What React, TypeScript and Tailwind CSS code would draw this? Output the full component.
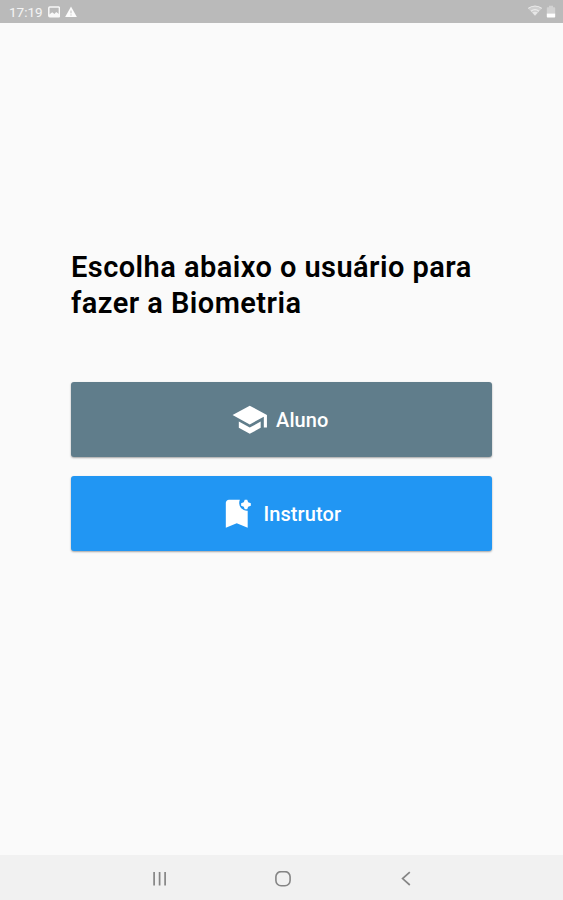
import React from 'react';
import { MdSchool } from 'react-icons/md';

// Bookmark with a soft four-pointed plus at its corner
const BookmarkPlusIcon = ({ className }: { className?: string }) => (
  <svg className={className} viewBox="0 0 24 24" fill="currentColor">
    <path d="M19 21l-7-3-7 3V5c0-1.1.9-2 2-2h7a5 5 0 0 0 5 7z" />
    <path d="M17.1 3.1h1.6l.6 1.6 1.7.6v1.6l-1.7.6-.6 1.6h-1.6l-.6-1.6-1.7-.6V5.3l1.7-.6z" />
  </svg>
);

const userOptions = [
  {
    label: 'Aluno',
    icon: MdSchool,
    bgColor: 'bg-[#607d8b]',
  },
  {
    label: 'Instrutor',
    icon: BookmarkPlusIcon,
    bgColor: 'bg-[#2196f3]',
  },
];

const StatusBar = () => (
  <header className="flex h-[23px] shrink-0 items-center justify-between bg-[#bababa] pl-[9px] pr-[7px] text-white">
    <div className="flex items-center">
      <span className="w-[34px] whitespace-nowrap pt-0.5 text-[13.5px] leading-none text-white/85">17:19</span>
      {/* Picture notification */}
      <svg className="ml-[5px] h-3 w-3 opacity-90" viewBox="0 0 12 12" fill="none">
        <rect x="0.8" y="1" width="10.6" height="9.8" rx="1" stroke="currentColor" strokeWidth="1.5" />
        <path d="M1 8.8 4.2 6.2l2.2 1.8 1.8-1.9L11 8v2.6H1z" fill="currentColor" />
      </svg>
      {/* Warning notification */}
      <svg className="ml-[5px] h-3 w-3" viewBox="0 0 12 12">
        <path d="M6 0.6 11.9 11H0.1z" fill="currentColor" fillOpacity="0.95" />
        <path d="M6 4.6v2.7M6 8.4v1.1" stroke="#bababa" strokeWidth="0.9" />
      </svg>
    </div>
    <div className="flex items-center pb-px">
      <svg className="h-3 w-4" viewBox="0 0 16 12" fill="none">
        <path d="M1 3.2C5-.2 11-.2 15 3.2L8 11z" fill="currentColor" fillOpacity="0.3" />
        <path d="M1.2 3.4c4-3.2 9.6-3.2 13.6 0M4 6.2c2.4-1.8 5.6-1.8 8 0" stroke="currentColor" strokeOpacity="0.6" strokeWidth="1.2" />
        <path d="M5.2 7.6c1.7-1.2 3.9-1.2 5.6 0L8 10.6z" fill="currentColor" fillOpacity="0.5" />
      </svg>
      <svg className="ml-[3px] h-[13px] w-2.5" viewBox="0 0 10 13">
        <path d="M3 .8h4v1.4h1.2c.6 0 1 .4 1 1v5.4H.8V3.2c0-.6.4-1 1-1H3z" fill="currentColor" fillOpacity="0.35" />
        <path d="M.8 8.6h8.4v2.8c0 .6-.4 1-1 1H1.8c-.6 0-1-.4-1-1z" fill="currentColor" />
      </svg>
    </div>
  </header>
);

const NavigationBar = () => (
  <nav className="flex h-[45px] shrink-0 items-center justify-center gap-[107px] bg-[#f1f1f1] pl-[2px] pt-0.5 text-[#858585]">
    <svg className="h-4 w-4" viewBox="0 0 16 16" fill="none" stroke="currentColor" strokeWidth="1.7">
      <path d="M2.1 1v13.4M7.6 1v13.4M13.1 1v13.4" />
    </svg>
    <svg className="h-4 w-4" viewBox="0 0 16 16" fill="none" stroke="currentColor" strokeWidth="1.6">
      <rect x="0.9" y="0.6" width="14.2" height="14.2" rx="5.2" />
    </svg>
    <svg className="h-4 w-4" viewBox="0 0 16 16" fill="none" stroke="currentColor" strokeWidth="1.7">
      <path d="M11.8 1.2 4.6 7.6l7.2 6.4" />
    </svg>
  </nav>
);

const App = () => {
  return (
    <div className="flex h-screen flex-col bg-[#fafafa] font-[Roboto,sans-serif]">
      <StatusBar />

      <main className="flex grow flex-col px-[71px] pt-[226px]">
        <h1 className="whitespace-nowrap text-[29px] font-semibold leading-9 tracking-[0.45px] text-black">
          Escolha abaixo o usuário para
          <br />
          fazer a Biometria
        </h1>

        <div className="mt-[61.4px] flex flex-col gap-[19px]">
          {userOptions.map((option) => (
            <button
              key={option.label}
              className={`flex h-[75px] w-full items-center justify-center gap-2 rounded-[3px] pr-1 text-xl font-medium tracking-[0.1px] text-white shadow-[0_1px_2px_rgba(0,0,0,0.35)] ${option.bgColor}`}
            >
              <option.icon className="h-[37.5px] w-[37.5px]" />
              {option.label}
            </button>
          ))}
        </div>
      </main>

      <NavigationBar />
    </div>
  );
};

export default App;
